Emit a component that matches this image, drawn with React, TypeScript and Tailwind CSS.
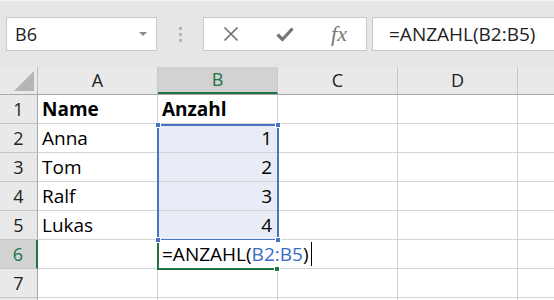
import React from 'react';

const cellFont = { fontFamily: '"Open Sans", "Noto Sans", sans-serif' };

const cols = ['A', 'B', 'C', 'D'];

const data: { a: string; b: string; bold?: boolean }[] = [
  { a: 'Name', b: 'Anzahl', bold: true },
  { a: 'Anna', b: '1' },
  { a: 'Tom', b: '2' },
  { a: 'Ralf', b: '3' },
  { a: 'Lukas', b: '4' },
  { a: '', b: '' },
  { a: '', b: '' },
  { a: '', b: '' },
];

const Handle: React.FC<{ x: number; y: number; color: string }> = ({ x, y, color }) => (
  <div
    className={`absolute w-[6px] h-[6px] border border-white ${color}`}
    style={{ left: x - 3, top: y - 3 }}
  />
);

const App: React.FC = () => {
  return (
    <div className="w-[554px] h-[300px] overflow-hidden bg-white select-none" style={cellFont}>
      {/* formula bar */}
      <div className="h-[67px] bg-[#e6e6e6] border-t border-[#f3f3f3] flex items-start pt-[16px]">
        <div className="ml-[6px] w-[151px] h-[34px] bg-white border border-[#c8c8c8] flex items-center justify-between pl-[8px] pr-[8px]">
          <span className="text-[18px] text-[#222]">B6</span>
          <svg width="10" height="6" viewBox="0 0 10 6">
            <path d="M1 1 L9 1 L5 5 Z" fill="#8a8a8a" />
          </svg>
        </div>
        <div className="w-[46px] h-[34px] flex flex-col items-center justify-center gap-[3px]">
          <div className="w-[3px] h-[3px] bg-[#b5b5b5]" />
          <div className="w-[3px] h-[3px] bg-[#b5b5b5]" />
          <div className="w-[3px] h-[3px] bg-[#b5b5b5]" />
        </div>
        <div className="w-[164px] h-[34px] bg-white border border-[#c8c8c8] flex items-center">
          <div className="w-[54px] flex justify-center">
            <svg width="16" height="16" viewBox="0 0 16 16">
              <path d="M1.5 1.5 L14.5 14.5 M14.5 1.5 L1.5 14.5" stroke="#6e6e6e" strokeWidth="1.6" />
            </svg>
          </div>
          <div className="w-[54px] flex justify-center">
            <svg width="18" height="16" viewBox="0 0 18 16">
              <path d="M1.5 8.5 L6.5 13.5 L16.5 2.5" stroke="#777" strokeWidth="3.2" fill="none" strokeLinejoin="round" />
            </svg>
          </div>
          <div className="w-[54px] flex justify-center">
            <span
              className="text-[22px] italic text-[#777] leading-none"
              style={{ fontFamily: '"Liberation Serif", "DejaVu Serif", serif' }}
            >
              fx
            </span>
          </div>
        </div>
        <div className="ml-[5px] flex-1 h-[34px] bg-white border border-[#c8c8c8] border-r-0 flex items-center pl-[16px]">
          <span className="text-[19px] text-[#222]">=ANZAHL(B2:B5)</span>
        </div>
      </div>

      {/* grid */}
      <div className="relative">
        {/* column header row */}
        <div className="flex h-[28px] bg-[#e9e9e9] border-b border-[#a8a8a8]">
          <div className="w-[38px] shrink-0 border-r border-[#bdbdbd] relative">
            <svg className="absolute right-[3px] bottom-[3px]" width="20" height="20" viewBox="0 0 20 20">
              <path d="M20 0 L20 20 L0 20 Z" fill="#b5b5b5" />
            </svg>
          </div>
          {cols.map((c) => (
            <div
              key={c}
              className={`w-[120px] shrink-0 flex items-center justify-center text-[18px] border-r border-[#c8c8c8] ${
                c === 'B' ? 'bg-[#d2d2d2] text-[#217346] border-b-2 border-b-[#217346]' : 'text-[#222]'
              }`}
            >
              {c}
            </div>
          ))}
          <div className="flex-1" />
        </div>

        {data.map((row, i) => {
          const n = i + 1;
          const sel = n >= 2 && n <= 5;
          const active = n === 6;
          return (
            <div key={n} className="flex h-[29px]">
              <div
                className={`w-[38px] shrink-0 flex items-center justify-center text-[18px] border-b border-[#c8c8c8] ${
                  active
                    ? 'bg-[#d2d2d2] text-[#217346] border-r-2 border-r-[#217346]'
                    : 'bg-[#e9e9e9] text-[#222] border-r border-r-[#a8a8a8]'
                }`}
              >
                {n <= 7 ? n : ''}
              </div>
              <div
                className={`w-[120px] shrink-0 flex items-center pl-[4px] text-[19px] text-black border-r border-b border-[#d4d4d4] ${
                  row.bold ? 'font-bold' : ''
                }`}
              >
                {row.a}
              </div>
              <div
                className={`w-[120px] shrink-0 flex items-center text-[19px] text-black border-r border-b border-[#d4d4d4] ${
                  row.bold ? 'font-bold pl-[4px]' : 'justify-end pr-[5px]'
                } ${sel ? 'bg-[#e8ecf7]' : ''}`}
              >
                {row.b}
              </div>
              <div className="w-[120px] shrink-0 border-r border-b border-[#d4d4d4]" />
              <div className="w-[120px] shrink-0 border-r border-b border-[#d4d4d4]" />
              <div className="flex-1 border-b border-[#d4d4d4]" />
            </div>
          );
        })}

        {/* referenced range B2:B5 */}
        <div className="absolute left-[157px] top-[57px] w-[122px] h-[117px] border-2 border-[#4a73c4] pointer-events-none" />
        {/* active editing cell B6 */}
        <div className="absolute left-[157px] top-[173px] w-[122px] h-[30px] border-l-2 border-b-2 border-[#217346] bg-white flex items-center pl-[3px]">
          <span className="text-[19px] text-black whitespace-nowrap">
            =ANZAHL(<span className="text-[#3a6bc2]">B2:B5</span>)
          </span>
          <div className="w-[1.5px] h-[24px] bg-black ml-[2px] shrink-0" />
        </div>
        <Handle x={158} y={58} color="bg-[#4a73c4]" />
        <Handle x={278} y={58} color="bg-[#4a73c4]" />
        <Handle x={158} y={173} color="bg-[#4a73c4]" />
        <Handle x={278} y={173} color="bg-[#4a73c4]" />
        <Handle x={277} y={202} color="bg-[#217346]" />
      </div>
    </div>
  );
};

export default App;
